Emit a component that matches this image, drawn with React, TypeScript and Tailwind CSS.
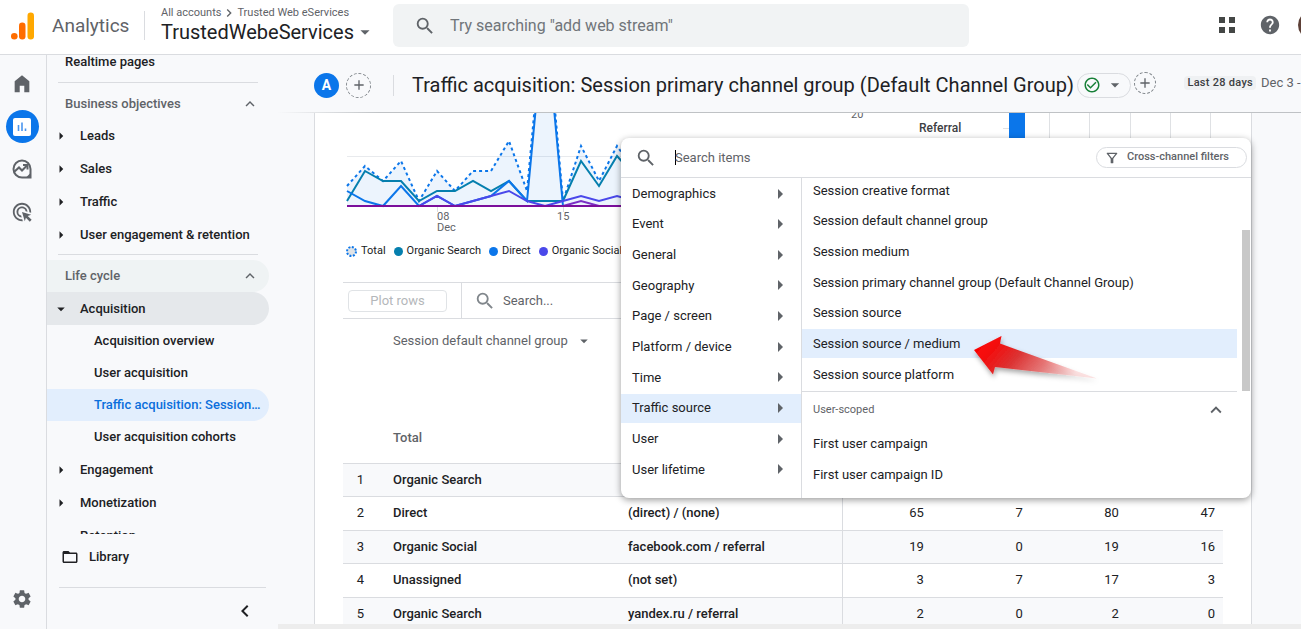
import React from "react";
import {
  MdAdd,
  MdAdsClick,
  MdArrowDropDown,
  MdArrowRight,
  MdCheckCircleOutline,
  MdChevronLeft,
  MdChevronRight,
  MdExpandLess,
  MdFolderOpen,
  MdHelp,
  MdOutlineFilterAlt,
  MdSearch,
  MdSettings,
} from "react-icons/md";

const objectives = ["Leads", "Sales", "Traffic", "User engagement & retention"];

const acquisitionPages = [
  "Acquisition overview",
  "User acquisition",
  "Traffic acquisition: Session primary channel group",
  "User acquisition cohorts",
];

const rows = [
  { channel: "Organic Search", source: "", values: ["", "", "", ""] },
  { channel: "Direct", source: "(direct) / (none)", values: [65, 7, 80, 47] },
  { channel: "Organic Social", source: "facebook.com / referral", values: [19, 0, 19, 16] },
  { channel: "Unassigned", source: "(not set)", values: [3, 7, 17, 3] },
  { channel: "Organic Search", source: "yandex.ru / referral", values: [2, 0, 2, 0] },
];

const categories = [
  "Demographics",
  "Event",
  "General",
  "Geography",
  "Page / screen",
  "Platform / device",
  "Time",
  "Traffic source",
  "User",
  "User lifetime",
];

const sessionItems = [
  "Session creative format",
  "Session default channel group",
  "Session medium",
  "Session primary channel group (Default Channel Group)",
  "Session source",
  "Session source / medium",
  "Session source platform",
];

const series = {
  total: [4, 8, 5, 9, 1, 7, 3, 7, 7, 13, 3, 42, 1, 12, 5, 12, 7],
  organic: [1, 7, 5, 5, 1, 3, 3, 5, 3, 5, 1, 1, 1, 9, 4, 10, 6],
  direct: [3, 1, 0, 4, 0, 2, 0, 1, 2, 5, 1, 39, 0, 0, 0, 0, 0],
  social: [0, 0, 0, 0, 0, 2, 0, 1, 2, 3, 1, 0, 1, 2, 1, 2, 1],
  referral: [0, 0, 0, 0, 0, 0, 0, 0, 0, 0, 0, 0, 0, 1, 0, 0, 0],
};

// one session is 5px high, one day is 18px wide
function toPoints(values: number[]) {
  return values.map((v, i) => `${4 + i * 18},${93 - v * 5}`).join(" ");
}

function Logo() {
  return (
    <svg width="24" height="28" viewBox="0 0 24 28" aria-hidden="true">
      <rect x="16.5" y="0.5" width="6.5" height="27" rx="3.2" fill="#ffa800" />
      <rect x="8" y="10.5" width="6.5" height="17" rx="3.2" fill="#ff6d00" />
      <circle cx="3.3" cy="24.2" r="3.3" fill="#ff6d00" />
    </svg>
  );
}

function TopBar() {
  return (
    <header className="flex h-[55px] shrink-0 items-start border-b border-[#dadce0] bg-white">
      <div className="flex h-[52px] w-[144px] shrink-0 items-center gap-[17px] pl-[11px]">
        <Logo />
        <span className="text-[19px] text-[#5f6368]">Analytics</span>
      </div>
      <div className="mt-[11px] h-[29px] w-px shrink-0 bg-[#dadce0]" />
      <div className="w-[248px] shrink-0 pl-4 pt-[5px]">
        <div className="flex items-center text-[11px] leading-[14px] text-[#5f6368]">
          <a href="#accounts">All accounts</a>
          <MdChevronRight size={16} />
          <a href="#property">Trusted Web eServices</a>
        </div>
        <button className="flex items-center text-[20px] leading-[22px] text-[#202124]">
          TrustedWebeServices
          <MdArrowDropDown size={22} className="text-[#5f6368]" />
        </button>
      </div>
      <label className="mt-1 flex h-[43px] w-[576px] min-w-0 items-center gap-[14px] rounded-md bg-[#f1f3f4] pl-[21px]">
        <MdSearch size={22} className="shrink-0 text-[#5f6368]" />
        <input
          aria-label="Search"
          placeholder={'Try searching "add web stream"'}
          className="w-full bg-transparent text-[16px] outline-none placeholder:text-[#70757a]"
        />
      </label>
      <div className="ml-auto flex h-[50px] shrink-0 items-center">
        <button aria-label="Apps" className="grid grid-cols-2 gap-1">
          <span className="size-[6px] bg-[#444746]" />
          <span className="size-[6px] bg-[#444746]" />
          <span className="size-[6px] bg-[#444746]" />
          <span className="size-[6px] bg-[#444746]" />
        </button>
        <button aria-label="Help" className="ml-6">
          <MdHelp size={22} className="text-[#5f6368]" />
        </button>
        <div className="ml-[17px] w-[3px] overflow-hidden">
          <div className="size-7 rounded-full bg-[#5d4037]" />
        </div>
      </div>
    </header>
  );
}

function Rail() {
  return (
    <nav aria-label="Sections" className="flex w-[47px] shrink-0 flex-col items-center border-r border-[#dadce0] pb-[19px] pr-[2px] pt-[18px] text-[#5f6368]">
      <a href="#home" aria-label="Home">
        <svg width="22" height="22" viewBox="0 0 24 24" fill="currentColor">
          <path d="M4 21V9l8-6.5L20 9v12h-5.500v-7h-5v7z" />
        </svg>
      </a>
      <a href="#reports" aria-label="Reports" className="mt-[15px] flex size-[33px] items-center justify-center rounded-full bg-[#0b76ea]">
        <svg width="18" height="18" viewBox="0 0 18 18">
          <rect width="18" height="18" rx="2" fill="#fff" />
          <path d="M5.500 7v6M9 4.500v8.500M12.500 10.500v2.500" stroke="#4a95ee" strokeWidth="1.600" />
        </svg>
      </a>
      <a href="#explore" aria-label="Explore" className="mt-[15px]">
        <svg width="22" height="22" viewBox="0 0 22 22" fill="none" stroke="currentColor" strokeWidth="2">
          <path d="M11 2.500a8.500 8.500 0 1 0 0 17h8.500V11A8.500 8.500 0 0 0 11 2.500z" />
          <path d="M3 14l5-4.500 3 3 5-5" />
          <path d="M12 7h4.500v4.500" />
          <path d="M15 19.500l4.500-4.500v4.500z" fill="currentColor" stroke="none" />
        </svg>
      </a>
      <a href="#advertising" aria-label="Advertising" className="mt-[21px]">
        <MdAdsClick size={22} />
      </a>
      <a href="#admin" aria-label="Admin" className="mt-auto">
        <MdSettings size={22} />
      </a>
    </nav>
  );
}

function NavGroup({ label }: { label: string }) {
  return (
    <button className="flex h-[33px] w-full items-center gap-[10px] pl-[5px] text-left">
      <MdArrowRight size={18} />
      {label}
    </button>
  );
}

function SideNav() {
  return (
    <nav aria-label="Reports" className="flex w-[231px] shrink-0 flex-col text-[13px] font-medium text-[#202124]">
      <div className="min-h-0 flex-1 overflow-hidden">
        <a href="#realtime" className="block pb-[13px] pl-[18px] leading-[14px]">Realtime pages</a>
        <div className="ml-[11px] w-[200px] border-t border-[#dadce0]" />
        <button className="mt-[5px] flex h-[31px] w-[222px] items-center justify-between pl-[18px] pr-[10px] text-[#5f6368]">
          Business objectives
          <MdExpandLess size={18} />
        </button>
        {objectives.map((label) => (
          <NavGroup key={label} label={label} />
        ))}
        <div className="ml-[11px] mt-[3px] w-[200px] border-t border-[#dadce0]" />
        <button className="mt-[5px] flex h-8 w-[222px] items-center justify-between rounded-r-full bg-[#eff3f4] pl-[18px] pr-[10px] text-[#5f6368]">
          Life cycle
          <MdExpandLess size={18} />
        </button>
        <button className="flex h-[33px] w-[222px] items-center gap-[10px] rounded-r-full bg-[#e5e8eb] pl-[5px]">
          <MdArrowDropDown size={18} />
          Acquisition
        </button>
        {acquisitionPages.map((page) => {
          const active = page.startsWith("Traffic");
          return (
            <a
              key={page}
              href="#page"
              className={`block h-8 w-[222px] truncate rounded-r-full pl-[47px] pr-[6px] leading-8 ${
                active ? "bg-[#e2eefd] text-[#0b6fdc]" : ""
              }`}
            >
              {page}
            </a>
          );
        })}
        <NavGroup label="Engagement" />
        <NavGroup label="Monetization" />
        <button className="flex h-[33px] w-full items-center pl-[33px]">Retention</button>
      </div>
      <div className="h-[95px] shrink-0">
        <a href="#library" className="flex h-[46px] items-center gap-[10px] pl-[14px]">
          <MdFolderOpen size={18} />
          Library
        </a>
        <div className="ml-[12px] mt-[7px] w-[207px] border-t border-[#dadce0]" />
        <button aria-label="Collapse" className="ml-[186px] mt-[11px] block">
          <MdChevronLeft size={24} />
        </button>
      </div>
    </nav>
  );
}

function TitleBar() {
  return (
    <div className="h-[58px] shrink-0">
      <div className="flex h-[57px] items-center pl-9 pt-[3px]">
        <span className="flex size-[25px] shrink-0 items-center justify-center rounded-full bg-[#0b76ea] text-[14px] font-bold text-white">A</span>
        <button aria-label="Add comparison" className="ml-[7px] flex size-[25px] shrink-0 items-center justify-center rounded-full border border-dashed border-[#80868b] text-[#5f6368]">
          <MdAdd size={16} />
        </button>
        <div className="ml-[22px] h-[21px] w-px shrink-0 bg-[#dadce0]" />
        <h1 className="ml-[18px] whitespace-nowrap text-[20px] text-[#202124]">
          Traffic acquisition: Session primary channel group (Default Channel Group)
        </h1>
        <button aria-label="Report status" className="ml-[3px] flex h-[25px] w-[54px] shrink-0 items-center justify-between rounded-full border border-[#dadce0] px-[5px]">
          <MdCheckCircleOutline size={18} className="text-[#188038]" />
          <MdArrowDropDown size={20} className="text-[#5f6368]" />
        </button>
        <button aria-label="Add filter" className="mb-1 ml-[3px] flex size-[22px] shrink-0 items-center justify-center rounded-full border border-dashed border-[#80868b] text-[#5f6368]">
          <MdAdd size={16} />
        </button>
        <div className="mb-1 ml-auto flex shrink-0 items-center gap-[5px]">
          <span className="rounded-sm bg-[#eff1f3] px-[3px] text-[11px] font-medium leading-[14px] tracking-wide text-[#3c4043]">Last 28 days</span>
          <span className="w-[40px] overflow-hidden whitespace-nowrap text-[13px] text-[#5f6368]">Dec 3 -</span>
        </div>
      </div>
      <div className="h-px bg-linear-to-r from-transparent via-[#bfc2c5] via-10% to-[#bfc2c5]" />
    </div>
  );
}

function SessionsChart() {
  return (
    <svg width="540" height="125" className="shrink-0 font-[Roboto]" fill="none" role="img" aria-label="Sessions over time">
      <path d="M4 43.500H500" stroke="#e8eaed" />
      <path d="M94.500 94v5M220.500 94v5" stroke="#dadce0" />
      <polygon points={`4,93 ${toPoints(series.total)} 292,93`} fill="#0b76ea" fillOpacity="0.08" />
      <polyline points={toPoints(series.total)} stroke="#0b76ea" strokeWidth="2" strokeDasharray="3 3" />
      <polyline points={toPoints(series.organic)} stroke="#057fae" strokeWidth="2" />
      <polyline points={toPoints(series.direct)} stroke="#0b76ea" strokeWidth="2" />
      <polyline points={toPoints(series.social)} stroke="#4a48ea" strokeWidth="2" />
      <polyline points={toPoints(series.referral)} stroke="#7b2fc4" strokeWidth="2" />
      <path d="M4 93H500" stroke="#7b0f9c" strokeWidth="2" />
      <g fill="#5f6368" fontSize="11">
        <text x="94" y="107">08</text>
        <text x="94" y="118">Dec</text>
        <text x="214" y="107">15</text>
        <text x="508" y="5">20</text>
      </g>
    </svg>
  );
}

function ChannelChart() {
  return (
    <svg width="340" height="125" className="shrink-0 font-[Roboto]" role="img" aria-label="Sessions by channel">
      <path d="M166.500 0V120M206.500 0V120M247.500 0V120M287.500 0V120M327.500 0V120M120 15.500h6" stroke="#dfe1e4" />
      <rect x="126" width="16" height="25" fill="#0b76ea" />
      <text x="36" y="19" fontSize="12" fontWeight="500" fill="#3c4043">Referral</text>
    </svg>
  );
}

function Legend() {
  return (
    <ul className="flex h-[26px] items-center gap-2 pl-[3px] pt-px text-[11px] text-[#202124]">
      <li className="flex items-center gap-1 whitespace-nowrap">
        <svg width="11" height="11" viewBox="0 0 11 11">
          <circle cx="5.5" cy="5.5" r="4.5" fill="#e0e3e6" stroke="#0b76ea" strokeWidth="2" strokeDasharray="2 1.5" />
        </svg>
        Total
      </li>
      <li className="flex items-center gap-1 whitespace-nowrap">
        <span className="size-[9px] rounded-full bg-[#057fae]" />
        Organic Search
      </li>
      <li className="flex items-center gap-1 whitespace-nowrap">
        <span className="size-[9px] rounded-full bg-[#0b76ea]" />
        Direct
      </li>
      <li className="flex items-center gap-1 whitespace-nowrap">
        <span className="size-[9px] rounded-full bg-[#4a48ea]" />
        Organic Social
      </li>
    </ul>
  );
}

function ReportTable() {
  return (
    <table className="w-full table-fixed border-collapse text-[13px] text-[#202124]">
      <colgroup>
        <col className="w-[35px]" />
        <col className="w-[235px]" />
        <col />
        <col className="w-[89px]" />
        <col className="w-[99px]" />
        <col className="w-[96px]" />
        <col className="w-[96px]" />
      </colgroup>
      <thead>
        <tr className="h-[43px] text-[#5f6368]">
          <td />
          <th colSpan={6} className="pl-[15px] text-left font-normal">
            <button className="flex items-center gap-[7px]">
              Session default channel group
              <MdArrowDropDown size={18} />
            </button>
          </th>
        </tr>
        <tr className="h-[101px] text-[#5f6368]">
          <td />
          <th colSpan={6} className="pb-[15px] pl-[15px] text-left align-bottom font-medium">Total</th>
        </tr>
      </thead>
      <tbody>
        {rows.map((row, i) => (
          <tr key={i} className="h-[33px] border-t border-[#dadce0] odd:bg-[#f8f9fb] even:h-[34px]">
            <td className="text-center">{i + 1}</td>
            <td className="pl-[15px] font-medium">{row.channel}</td>
            <td className="border-r border-[#dadce0] pl-[15px] font-medium">{row.source}</td>
            {row.values.map((value, j) => (
              <td key={j} className="pr-2 text-right">{value}</td>
            ))}
          </tr>
        ))}
      </tbody>
    </table>
  );
}

function ArrowMark() {
  return (
    <svg width="136" height="60" viewBox="0 0 136 60" className="pointer-events-none absolute left-[347px] top-[190px]" aria-hidden="true">
      <defs>
        <linearGradient id="arrow" x1="0" y1="0" x2="1" y2="0.3">
          <stop offset="0" stopColor="#ff0000" />
          <stop offset="0.2" stopColor="#f50a0a" />
          <stop offset="0.45" stopColor="#dc3232" />
          <stop offset="0.7" stopColor="#e66a6a" stopOpacity="0.9" />
          <stop offset="1" stopColor="#f7a0a0" stopOpacity="0.3" />
        </linearGradient>
        <filter id="soft" x="-20%" y="-30%" width="140%" height="170%">
          <feDropShadow dx="1" dy="3" stdDeviation="2.500" floodOpacity="0.35" />
        </filter>
      </defs>
      <path d="M6 22L33.500 8 32 15.500 129 50.500 27 39 25 46.500z" fill="url(#arrow)" filter="url(#soft)" />
    </svg>
  );
}

function DimensionPicker() {
  return (
    <div role="dialog" aria-label="Choose dimension" className="absolute left-[343px] top-[83px] flex h-[360px] w-[630px] flex-col overflow-hidden rounded-lg bg-white text-[13px] text-[#202124] shadow-[0_2px_7px_rgba(0,0,0,0.4)]">
      <div className="flex h-10 shrink-0 items-center border-b border-[#dadce0] pl-[14px] pr-1">
        <MdSearch size={22} className="shrink-0 text-[#5f6368]" />
        <span className="ml-[18px] h-[15px] w-px shrink-0 bg-black" />
        <input
          aria-label="Search items"
          placeholder="Search items"
          className="-ml-px min-w-0 flex-1 bg-transparent outline-none placeholder:text-[#5f6368]"
        />
        <button className="flex h-[21px] w-[151px] items-center gap-[7px] rounded-full border border-[#dadce0] pl-[7px] text-[11px] font-medium text-[#5f6368]">
          <MdOutlineFilterAlt size={16} />
          Cross-channel filters
        </button>
      </div>
      <div className="flex min-h-0 flex-1">
        <div className="w-[181px] shrink-0 border-r border-[#dadce0] pt-px">
          <div className="flex h-[305px] flex-col justify-between">
            {categories.map((name) => (
              <button
                key={name}
                className={`flex h-[29px] items-center justify-between pl-[11px] pr-[9px] ${
                  name === "Traffic source" ? "bg-[#e2eefd]" : ""
                }`}
              >
                {name}
                <MdArrowRight size={24} className="text-[#5f6368]" />
              </button>
            ))}
          </div>
        </div>
        <div className="min-w-0 flex-1 overflow-hidden">
          <div className="-mt-[2px] mr-[14px] flex h-[213px] flex-col justify-between">
            {sessionItems.map((name) => (
              <button
                key={name}
                className={`h-[29px] pl-[11px] text-left ${
                  name === "Session source / medium" ? "bg-[#e2eefd]" : ""
                }`}
              >
                {name}
              </button>
            ))}
          </div>
          <div className="mr-[14px] mt-[2px] border-t border-[#dadce0]">
            <button className="flex h-9 w-full items-center justify-between pl-[11px] pr-[10px] text-[11px] text-[#5f6368]">
              User-scoped
              <MdExpandLess size={22} />
            </button>
            <button className="block h-[31px] pl-[11px]">First user campaign</button>
            <button className="block h-[31px] pl-[11px]">First user campaign ID</button>
          </div>
        </div>
      </div>
      <div className="absolute right-[1px] top-[92px] h-[161px] w-2 bg-[#c8c8c8]" />
      <ArrowMark />
    </div>
  );
}

export default function App() {
  return (
    <div className="flex h-screen flex-col overflow-hidden bg-[#f8f9fb] font-[Roboto,sans-serif]">
      <TopBar />
      <div className="flex min-h-0 flex-1">
        <Rail />
        <SideNav />
        <main className="relative flex min-w-0 flex-1 flex-col">
          <TitleBar />
          <div className="ml-9 mr-[49px] min-h-0 flex-1 overflow-hidden border-x border-[#dadce0] bg-white px-7">
            <div className="flex">
              <SessionsChart />
              <ChannelChart />
            </div>
            <Legend />
            <div className="mt-[18px] flex h-[37px] border-y border-[#dadce0]">
              <div className="flex w-[119px] shrink-0 items-center border-r border-[#dadce0] pl-[5px]">
                <button disabled className="h-[22px] w-[99px] rounded border border-[#e0e3e6] text-[13px] text-[#b4b7ba]">
                  Plot rows
                </button>
              </div>
              <label className="flex items-center gap-[7px] pl-3 text-[#80868b]">
                <MdSearch size={22} />
                <input
                  aria-label="Search rows"
                  placeholder="Search..."
                  className="bg-transparent text-[13px] outline-none placeholder:text-[#5f6368]"
                />
              </label>
            </div>
            <ReportTable />
          </div>
          <div className="h-[5px] shrink-0 bg-[#ededed]" />
          <DimensionPicker />
        </main>
      </div>
    </div>
  );
}
